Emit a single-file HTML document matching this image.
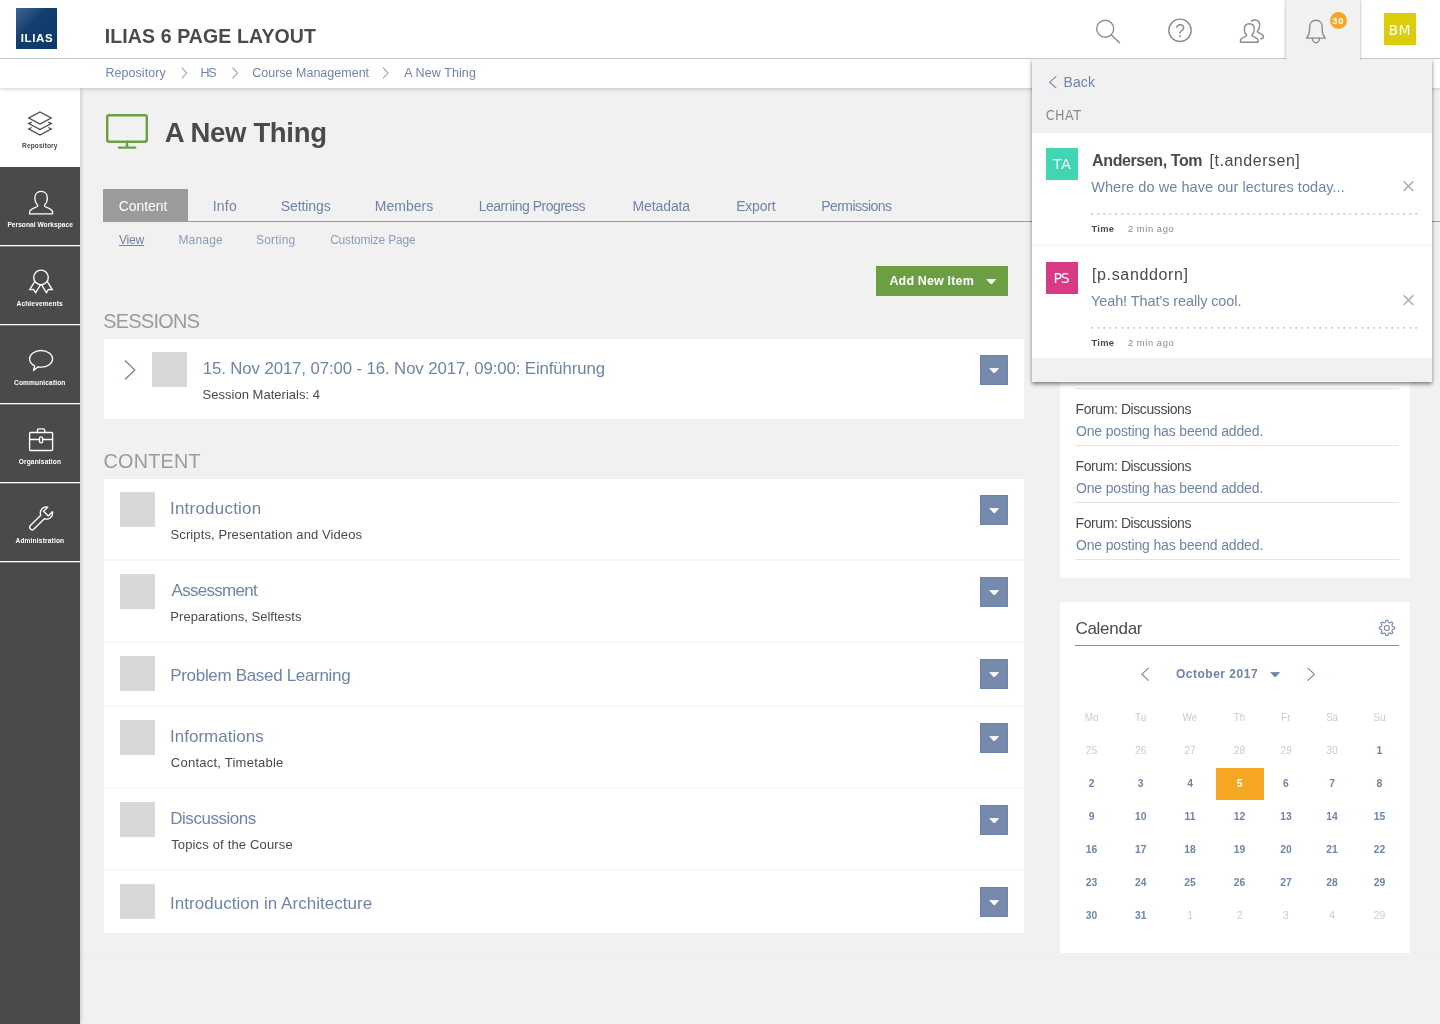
<!DOCTYPE html>
<html lang="en">
<head>
<meta charset="utf-8">
<title>ILIAS 6 Page Layout</title>
<style>
*{box-sizing:border-box;margin:0;padding:0}
html,body{width:1440px;height:1024px;overflow:hidden;background:#f1f1f1;font-family:"Liberation Sans",sans-serif;color:#4a4a4a}
.layer{position:absolute;left:0;top:0;width:1440px;height:1024px;will-change:transform}
.a{position:absolute}
.t{position:absolute;white-space:nowrap;line-height:1}
.c{position:absolute;white-space:nowrap;line-height:1;text-align:center;width:48px;margin-left:-24px}
</style>
</head>
<body>
<div class="layer" id="main" style="z-index:1">
<svg class="a" style="left:103px;top:111px" width="48" height="40" viewBox="103 111 48 40" fill="none" stroke="#6c9f43" stroke-width="2.4" stroke-linejoin="round" stroke-linecap="round"><rect x="107.2" y="115.300" width="39.600" height="26.400" rx="2"/><path d="M127 142v5.400M119 147.600h16.200"/></svg>
<div class="t" id="ptitle" style="left:164.67px;top:118.50px;font-size:27.5px;color:#4a4a4a;font-weight:bold;letter-spacing:-0.323px;">A New Thing</div>
<div class="a" style="left:103px;top:189px;width:85px;height:32px;background:#9b9b9b;"></div>
<div class="a" style="left:103px;top:221px;width:1337px;height:1px;background:#9b9b9b;"></div>
<div class="t" id="tab0" style="left:118.73px;top:199.11px;font-size:14px;color:#fff;letter-spacing:-0.070px;">Content</div>
<div class="t" id="tab1" style="left:212.70px;top:199.11px;font-size:14px;color:#6f84a8;letter-spacing:0.222px;">Info</div>
<div class="t" id="tab2" style="left:280.82px;top:199.11px;font-size:14px;color:#6f84a8;letter-spacing:-0.110px;">Settings</div>
<div class="t" id="tab3" style="left:374.86px;top:199.11px;font-size:14px;color:#6f84a8;letter-spacing:-0.008px;">Members</div>
<div class="t" id="tab4" style="left:478.67px;top:199.11px;font-size:14px;color:#6f84a8;letter-spacing:-0.476px;">Learning Progress</div>
<div class="t" id="tab5" style="left:632.59px;top:199.11px;font-size:14px;color:#6f84a8;letter-spacing:-0.120px;">Metadata</div>
<div class="t" id="tab6" style="left:736.13px;top:199.11px;font-size:14px;color:#6f84a8;letter-spacing:-0.170px;">Export</div>
<div class="t" id="tab7" style="left:821.13px;top:199.11px;font-size:14px;color:#6f84a8;letter-spacing:-0.530px;">Permissions</div>
<div class="t" id="sub0" style="left:118.90px;top:233.90px;font-size:12px;color:#6f84a8;letter-spacing:-0.166px;text-decoration:underline;">View</div>
<div class="t" id="sub1" style="left:178.43px;top:233.90px;font-size:12px;color:#8c9cba;letter-spacing:0.191px;">Manage</div>
<div class="t" id="sub2" style="left:256.00px;top:233.90px;font-size:12px;color:#8c9cba;letter-spacing:0.201px;">Sorting</div>
<div class="t" id="sub3" style="left:330.16px;top:233.90px;font-size:12px;color:#8c9cba;letter-spacing:-0.199px;">Customize Page</div>
<div class="a" style="left:876px;top:266px;width:132px;height:30px;background:#6c9f43;"></div>
<div class="t" id="addbtn" style="left:889.44px;top:275.30px;font-size:12.5px;color:#fff;font-weight:bold;letter-spacing:0.155px;">Add New Item</div>
<svg class="a" style="left:985.8px;top:278.8px" width="10.4" height="5.6" viewBox="0 0 10.4 5.6"><path d="M0.600 0.300h9.200000000000001L5.2 5.3999999999999995z" fill="#fff" stroke="#fff" stroke-width="0.600" stroke-linejoin="round"/></svg>
<div class="t" id="h_sessions" style="left:103.33px;top:312.10px;font-size:19.8px;color:#9b9b9b;letter-spacing:-0.661px;">SESSIONS</div>
<div class="t" id="h_content" style="left:103.55px;top:452.01px;font-size:19.8px;color:#9b9b9b;letter-spacing:0.230px;">CONTENT</div>
<div class="a" style="left:104px;top:339px;width:920px;height:80px;background:#fff;"></div>
<svg class="a" style="left:120px;top:356px" width="20" height="28" viewBox="120 356 20 28" fill="none" stroke="#6f84a8" stroke-width="1.3" stroke-linejoin="miter"><path d="M125 360.500L134.800 370 125 379.500"/></svg>
<div class="a" style="left:152px;top:352px;width:35px;height:35px;background:#d8d8d8;"></div>
<div class="t" id="sess_t" style="left:202.78px;top:360.90px;font-size:16.8px;color:#6f84a8;letter-spacing:-0.104px;">15. Nov 2017, 07:00 - 16. Nov 2017, 09:00: Einführung</div>
<div class="t" id="sess_s" style="left:202.55px;top:388.11px;font-size:13px;color:#4a4a4a;letter-spacing:0.022px;">Session Materials: 4</div>
<div class="a" style="left:980px;top:355px;width:28px;height:30px;background:#758aad;border:1px solid #6d83a8"></div><svg class="a" style="left:988.8px;top:367.8px" width="10.4" height="5.6" viewBox="0 0 10.4 5.6"><path d="M0.600 0.300h9.200000000000001L5.2 5.3999999999999995z" fill="#fff" stroke="#fff" stroke-width="0.600" stroke-linejoin="round"/></svg>
<div class="a" style="left:104px;top:479px;width:920px;height:454px;background:#f7f7f7;"></div>
<div class="a" style="left:104px;top:479px;width:920px;height:80px;background:#fff;"></div>
<div class="a" style="left:120px;top:492px;width:35px;height:35px;background:#d8d8d8;"></div>
<div class="t" id="it0_t" style="left:170.02px;top:500.00px;font-size:17px;color:#6f84a8;letter-spacing:0.215px;">Introduction</div>
<div class="t" id="it0_s" style="left:170.57px;top:528.25px;font-size:13px;color:#4a4a4a;letter-spacing:0.099px;">Scripts, Presentation and Videos</div>
<div class="a" style="left:980px;top:495px;width:28px;height:30px;background:#758aad;border:1px solid #6d83a8"></div><svg class="a" style="left:988.8px;top:507.8px" width="10.4" height="5.6" viewBox="0 0 10.4 5.6"><path d="M0.600 0.300h9.200000000000001L5.2 5.3999999999999995z" fill="#fff" stroke="#fff" stroke-width="0.600" stroke-linejoin="round"/></svg>
<div class="a" style="left:104px;top:561px;width:920px;height:80px;background:#fff;"></div>
<div class="a" style="left:120px;top:574px;width:35px;height:35px;background:#d8d8d8;"></div>
<div class="t" id="it1_t" style="left:171.51px;top:582.00px;font-size:17px;color:#6f84a8;letter-spacing:-0.710px;">Assessment</div>
<div class="t" id="it1_s" style="left:170.36px;top:610.25px;font-size:13px;color:#4a4a4a;letter-spacing:0.015px;">Preparations, Selftests</div>
<div class="a" style="left:980px;top:577px;width:28px;height:30px;background:#758aad;border:1px solid #6d83a8"></div><svg class="a" style="left:988.8px;top:589.8px" width="10.4" height="5.6" viewBox="0 0 10.4 5.6"><path d="M0.600 0.300h9.200000000000001L5.2 5.3999999999999995z" fill="#fff" stroke="#fff" stroke-width="0.600" stroke-linejoin="round"/></svg>
<div class="a" style="left:104px;top:643px;width:920px;height:62px;background:#fff;"></div>
<div class="a" style="left:120px;top:656px;width:35px;height:35px;background:#d8d8d8;"></div>
<div class="t" id="it2_t" style="left:170.26px;top:667.40px;font-size:17px;color:#6f84a8;letter-spacing:-0.320px;">Problem Based Learning</div>
<div class="a" style="left:980px;top:659px;width:28px;height:30px;background:#758aad;border:1px solid #6d83a8"></div><svg class="a" style="left:988.8px;top:671.8px" width="10.4" height="5.6" viewBox="0 0 10.4 5.6"><path d="M0.600 0.300h9.200000000000001L5.2 5.3999999999999995z" fill="#fff" stroke="#fff" stroke-width="0.600" stroke-linejoin="round"/></svg>
<div class="a" style="left:104px;top:707px;width:920px;height:80px;background:#fff;"></div>
<div class="a" style="left:120px;top:720px;width:35px;height:35px;background:#d8d8d8;"></div>
<div class="t" id="it3_t" style="left:170.02px;top:728.00px;font-size:17px;color:#6f84a8;letter-spacing:0.012px;">Informations</div>
<div class="t" id="it3_s" style="left:170.80px;top:756.25px;font-size:13px;color:#4a4a4a;letter-spacing:0.244px;">Contact, Timetable</div>
<div class="a" style="left:980px;top:723px;width:28px;height:30px;background:#758aad;border:1px solid #6d83a8"></div><svg class="a" style="left:988.8px;top:735.8px" width="10.4" height="5.6" viewBox="0 0 10.4 5.6"><path d="M0.600 0.300h9.200000000000001L5.2 5.3999999999999995z" fill="#fff" stroke="#fff" stroke-width="0.600" stroke-linejoin="round"/></svg>
<div class="a" style="left:104px;top:789px;width:920px;height:80px;background:#fff;"></div>
<div class="a" style="left:120px;top:802px;width:35px;height:35px;background:#d8d8d8;"></div>
<div class="t" id="it4_t" style="left:170.26px;top:810.00px;font-size:17px;color:#6f84a8;letter-spacing:-0.476px;">Discussions</div>
<div class="t" id="it4_s" style="left:171.14px;top:838.25px;font-size:13px;color:#4a4a4a;letter-spacing:0.162px;">Topics of the Course</div>
<div class="a" style="left:980px;top:805px;width:28px;height:30px;background:#758aad;border:1px solid #6d83a8"></div><svg class="a" style="left:988.8px;top:817.8px" width="10.4" height="5.6" viewBox="0 0 10.4 5.6"><path d="M0.600 0.300h9.200000000000001L5.2 5.3999999999999995z" fill="#fff" stroke="#fff" stroke-width="0.600" stroke-linejoin="round"/></svg>
<div class="a" style="left:104px;top:871px;width:920px;height:62px;background:#fff;"></div>
<div class="a" style="left:120px;top:884px;width:35px;height:35px;background:#d8d8d8;"></div>
<div class="t" id="it5_t" style="left:170.02px;top:895.40px;font-size:17px;color:#6f84a8;letter-spacing:0.032px;">Introduction in Architecture</div>
<div class="a" style="left:980px;top:887px;width:28px;height:30px;background:#758aad;border:1px solid #6d83a8"></div><svg class="a" style="left:988.8px;top:899.8px" width="10.4" height="5.6" viewBox="0 0 10.4 5.6"><path d="M0.600 0.300h9.200000000000001L5.2 5.3999999999999995z" fill="#fff" stroke="#fff" stroke-width="0.600" stroke-linejoin="round"/></svg>
<div class="a" style="left:80px;top:952px;width:1360px;height:1px;background:#ededed;"></div>
<div class="a" style="left:1060px;top:300px;width:350px;height:278px;background:#fff;"></div>
<div class="a" style="left:1075px;top:388px;width:324px;height:1px;background:#e4e4e4;"></div>
<div class="a" style="left:1075px;top:445px;width:324px;height:1px;background:#e4e4e4;"></div>
<div class="a" style="left:1075px;top:502px;width:324px;height:1px;background:#e4e4e4;"></div>
<div class="a" style="left:1075px;top:559px;width:324px;height:1px;background:#e4e4e4;"></div>
<div class="t" id="nw0_a" style="left:1075.57px;top:402.01px;font-size:14px;color:#4a4a4a;letter-spacing:-0.416px;">Forum: Discussions</div>
<div class="t" id="nw0_b" style="left:1075.95px;top:424.21px;font-size:14px;color:#6f84a8;letter-spacing:-0.154px;">One posting has beend added.</div>
<div class="t" id="nw1_a" style="left:1075.57px;top:459.01px;font-size:14px;color:#4a4a4a;letter-spacing:-0.416px;">Forum: Discussions</div>
<div class="t" id="nw1_b" style="left:1075.95px;top:481.21px;font-size:14px;color:#6f84a8;letter-spacing:-0.154px;">One posting has beend added.</div>
<div class="t" id="nw2_a" style="left:1075.57px;top:516.01px;font-size:14px;color:#4a4a4a;letter-spacing:-0.416px;">Forum: Discussions</div>
<div class="t" id="nw2_b" style="left:1075.95px;top:538.21px;font-size:14px;color:#6f84a8;letter-spacing:-0.154px;">One posting has beend added.</div>
<div class="a" style="left:1060px;top:602px;width:350px;height:351px;background:#fff;"></div>
<div class="t" id="cal_t" style="left:1075.38px;top:620.25px;font-size:17px;color:#4a4a4a;letter-spacing:-0.268px;">Calendar</div>
<div class="a" style="left:1075px;top:645px;width:324px;height:1px;background:#8e8e8e;"></div>
<svg class="a" style="left:1377px;top:618px" width="20" height="20" viewBox="1377 618 20 20" fill="none" stroke="#6f84a8" stroke-width="1.05" stroke-linejoin="round" stroke-linecap="round"><path d="M1385.53 622.37 L1385.93 620.26 L1387.87 620.26 L1388.27 622.37 L1389.84 623.02 L1391.62 621.82 L1392.98 623.18 L1391.78 624.96 L1392.43 626.53 L1394.54 626.93 L1394.54 628.87 L1392.43 629.27 L1391.78 630.84 L1392.98 632.62 L1391.62 633.98 L1389.84 632.78 L1388.27 633.43 L1387.87 635.54 L1385.93 635.54 L1385.53 633.43 L1383.96 632.78 L1382.18 633.98 L1380.82 632.62 L1382.02 630.84 L1381.37 629.27 L1379.26 628.87 L1379.26 626.93 L1381.37 626.53 L1382.02 624.96 L1380.82 623.18 L1382.18 621.82 L1383.96 623.02Z"/><circle cx="1386.900" cy="627.900" r="2.500"/></svg>
<div class="t" id="cal_m" style="left:1175.97px;top:668.01px;font-size:12px;color:#6f84a8;font-weight:bold;letter-spacing:0.506px;">October 2017</div>
<svg class="a" style="left:1270px;top:671.6px" width="10.4" height="5.6" viewBox="0 0 10.4 5.6"><path d="M0.600 0.300h9.200000000000001L5.2 5.3999999999999995z" fill="#6f84a8" stroke="#6f84a8" stroke-width="0.600" stroke-linejoin="round"/></svg>
<svg class="a" style="left:1138px;top:664px" width="14" height="20" viewBox="1138 664 14 20" fill="none" stroke="#6f84a8" stroke-width="1.1" stroke-linejoin="miter"><path d="M1148.700 667.800L1141.900 674.200 1148.700 680.600"/></svg>
<svg class="a" style="left:1304px;top:664px" width="14" height="20" viewBox="1304 664 14 20" fill="none" stroke="#6f84a8" stroke-width="1.1" stroke-linejoin="miter"><path d="M1307.600 667.800L1314.400 674.200 1307.600 680.600"/></svg>
<div class="c" style="left:1091.6px;top:712.93px;font-size:10px;color:#cccccc">Mo</div>
<div class="c" style="left:1140.7px;top:712.93px;font-size:10px;color:#cccccc">Tu</div>
<div class="c" style="left:1190px;top:712.93px;font-size:10px;color:#cccccc">We</div>
<div class="c" style="left:1239.6px;top:712.93px;font-size:10px;color:#cccccc">Th</div>
<div class="c" style="left:1285.9px;top:712.93px;font-size:10px;color:#cccccc">Fr</div>
<div class="c" style="left:1332px;top:712.93px;font-size:10px;color:#cccccc">Sa</div>
<div class="c" style="left:1379.4px;top:712.93px;font-size:10px;color:#cccccc">Su</div>
<div class="a" style="left:1216px;top:768px;width:48px;height:32px;background:#f5a623;"></div>
<div class="c" style="left:1091.6px;top:746.33px;font-size:10.3px;color:#cccccc">25</div>
<div class="c" style="left:1140.7px;top:746.33px;font-size:10.3px;color:#cccccc">26</div>
<div class="c" style="left:1190px;top:746.33px;font-size:10.3px;color:#cccccc">27</div>
<div class="c" style="left:1239.6px;top:746.33px;font-size:10.3px;color:#cccccc">28</div>
<div class="c" style="left:1285.9px;top:746.33px;font-size:10.3px;color:#cccccc">29</div>
<div class="c" style="left:1332px;top:746.33px;font-size:10.3px;color:#cccccc">30</div>
<div class="c" style="left:1379.4px;top:746.33px;font-size:10.3px;color:#6f84a8;font-weight:bold">1</div>
<div class="c" style="left:1091.6px;top:779.33px;font-size:10.3px;color:#6f84a8;font-weight:bold">2</div>
<div class="c" style="left:1140.7px;top:779.33px;font-size:10.3px;color:#6f84a8;font-weight:bold">3</div>
<div class="c" style="left:1190px;top:779.33px;font-size:10.3px;color:#6f84a8;font-weight:bold">4</div>
<div class="c" style="left:1239.6px;top:779.33px;font-size:10.3px;color:#fff;font-weight:bold">5</div>
<div class="c" style="left:1285.9px;top:779.33px;font-size:10.3px;color:#6f84a8;font-weight:bold">6</div>
<div class="c" style="left:1332px;top:779.33px;font-size:10.3px;color:#6f84a8;font-weight:bold">7</div>
<div class="c" style="left:1379.4px;top:779.33px;font-size:10.3px;color:#6f84a8;font-weight:bold">8</div>
<div class="c" style="left:1091.6px;top:812.33px;font-size:10.3px;color:#6f84a8;font-weight:bold">9</div>
<div class="c" style="left:1140.7px;top:812.33px;font-size:10.3px;color:#6f84a8;font-weight:bold">10</div>
<div class="c" style="left:1190px;top:812.33px;font-size:10.3px;color:#6f84a8;font-weight:bold">11</div>
<div class="c" style="left:1239.6px;top:812.33px;font-size:10.3px;color:#6f84a8;font-weight:bold">12</div>
<div class="c" style="left:1285.9px;top:812.33px;font-size:10.3px;color:#6f84a8;font-weight:bold">13</div>
<div class="c" style="left:1332px;top:812.33px;font-size:10.3px;color:#6f84a8;font-weight:bold">14</div>
<div class="c" style="left:1379.4px;top:812.33px;font-size:10.3px;color:#6f84a8;font-weight:bold">15</div>
<div class="c" style="left:1091.6px;top:845.33px;font-size:10.3px;color:#6f84a8;font-weight:bold">16</div>
<div class="c" style="left:1140.7px;top:845.33px;font-size:10.3px;color:#6f84a8;font-weight:bold">17</div>
<div class="c" style="left:1190px;top:845.33px;font-size:10.3px;color:#6f84a8;font-weight:bold">18</div>
<div class="c" style="left:1239.6px;top:845.33px;font-size:10.3px;color:#6f84a8;font-weight:bold">19</div>
<div class="c" style="left:1285.9px;top:845.33px;font-size:10.3px;color:#6f84a8;font-weight:bold">20</div>
<div class="c" style="left:1332px;top:845.33px;font-size:10.3px;color:#6f84a8;font-weight:bold">21</div>
<div class="c" style="left:1379.4px;top:845.33px;font-size:10.3px;color:#6f84a8;font-weight:bold">22</div>
<div class="c" style="left:1091.6px;top:878.33px;font-size:10.3px;color:#6f84a8;font-weight:bold">23</div>
<div class="c" style="left:1140.7px;top:878.33px;font-size:10.3px;color:#6f84a8;font-weight:bold">24</div>
<div class="c" style="left:1190px;top:878.33px;font-size:10.3px;color:#6f84a8;font-weight:bold">25</div>
<div class="c" style="left:1239.6px;top:878.33px;font-size:10.3px;color:#6f84a8;font-weight:bold">26</div>
<div class="c" style="left:1285.9px;top:878.33px;font-size:10.3px;color:#6f84a8;font-weight:bold">27</div>
<div class="c" style="left:1332px;top:878.33px;font-size:10.3px;color:#6f84a8;font-weight:bold">28</div>
<div class="c" style="left:1379.4px;top:878.33px;font-size:10.3px;color:#6f84a8;font-weight:bold">29</div>
<div class="c" style="left:1091.6px;top:911.33px;font-size:10.3px;color:#6f84a8;font-weight:bold">30</div>
<div class="c" style="left:1140.7px;top:911.33px;font-size:10.3px;color:#6f84a8;font-weight:bold">31</div>
<div class="c" style="left:1190px;top:911.33px;font-size:10.3px;color:#cccccc">1</div>
<div class="c" style="left:1239.6px;top:911.33px;font-size:10.3px;color:#cccccc">2</div>
<div class="c" style="left:1285.9px;top:911.33px;font-size:10.3px;color:#cccccc">3</div>
<div class="c" style="left:1332px;top:911.33px;font-size:10.3px;color:#cccccc">4</div>
<div class="c" style="left:1379.4px;top:911.33px;font-size:10.3px;color:#cccccc">29</div>
</div>
<div class="layer" id="side" style="z-index:10">
<div class="a" style="left:0px;top:88px;width:80px;height:936px;background:#4a4a4a;box-shadow:1px 0 4px rgba(0,0,0,.18)"></div>
<div class="a" style="left:0px;top:88px;width:80px;height:79px;background:#fff;"></div>
<div class="a" style="left:0px;top:245px;width:80px;height:1px;background:#fff;"></div>
<div class="a" style="left:0px;top:246px;width:80px;height:1px;background:#7c7c7c;"></div>
<div class="a" style="left:0px;top:324px;width:80px;height:1px;background:#fff;"></div>
<div class="a" style="left:0px;top:325px;width:80px;height:1px;background:#7c7c7c;"></div>
<div class="a" style="left:0px;top:403px;width:80px;height:1px;background:#fff;"></div>
<div class="a" style="left:0px;top:404px;width:80px;height:1px;background:#7c7c7c;"></div>
<div class="a" style="left:0px;top:482px;width:80px;height:1px;background:#fff;"></div>
<div class="a" style="left:0px;top:483px;width:80px;height:1px;background:#7c7c7c;"></div>
<div class="a" style="left:0px;top:561px;width:80px;height:1px;background:#fff;"></div>
<div class="a" style="left:0px;top:562px;width:80px;height:1px;background:#7c7c7c;"></div>
<svg class="a" style="left:26px;top:108px" width="30" height="30" viewBox="26 108 30 30" fill="none" stroke="#4a4a4a" stroke-width="1.35" stroke-linejoin="miter"><path d="M40 112L51.200 118 40 124 28.800 118z"/><path d="M31.600 122.100L28.800 123.600 40 129.600 51.200 123.600 48.400 122.100M31.600 127.500L28.800 129 40 135 51.200 129 48.400 127.500"/></svg>
<svg class="a" style="left:26px;top:187px" width="30" height="30" viewBox="26 187 30 30" fill="none" stroke="#fff" stroke-width="1.35" stroke-linejoin="round" stroke-linecap="round"><path d="M41.100 191.400c-4.100 0-6.300 3-6.300 6.900 0 2.800 1.100 5 2.600 6.500 0.500 0.500 0.400 1.300-0.200 1.700-2.400 1.400-7.600 2.500-7.600 5.500v1.900h23v-1.900c0-3-5.200-4.100-7.600-5.500-0.600-0.400-0.700-1.200-0.200-1.700 1.500-1.500 2.600-3.700 2.600-6.500 0-3.900-2.200-6.900-6.300-6.900z"/></svg>
<svg class="a" style="left:26px;top:266px" width="30" height="30" viewBox="26 266 30 30" fill="none" stroke="#fff" stroke-width="1.35" stroke-linejoin="round" stroke-linecap="round"><circle cx="41" cy="277.400" r="7.300"/><path d="M34.400 282L29.800 289.600 33.600 289.400 35.600 292.800 40.500 284.700M47.600 282L52.200 289.600 48.400 289.400 46.400 292.800 41.500 284.700" stroke-linejoin="miter"/></svg>
<svg class="a" style="left:26px;top:346px" width="30" height="28" viewBox="26 346 30 28" fill="none" stroke="#fff" stroke-width="1.35" stroke-linejoin="round" stroke-linecap="round"><path d="M34.700 365.900C31.500 364.400 29.600 361.800 29.600 358.800c0-4.600 5.100-8.300 11.500-8.300s11.500 3.700 11.500 8.300-5.100 8.300-11.500 8.300c-1 0-2-0.100-2.900-0.300L33.500 370.500z"/></svg>
<svg class="a" style="left:26px;top:425px" width="30" height="30" viewBox="26 425 30 30" fill="none" stroke="#fff" stroke-width="1.35" stroke-linejoin="round" stroke-linecap="round"><rect x="29.600" y="432.500" width="23" height="18" rx="1"/><path d="M37.400 432.500v-2.100c0-0.900 0.700-1.600 1.600-1.600h4.200c0.900 0 1.600 0.700 1.600 1.600v2.100M29.600 439.500h9.800M42.600 439.500h10"/><rect x="39.500" y="436.800" width="3.100" height="6" rx="1.400"/></svg>
<svg class="a" style="left:26px;top:503px" width="30" height="32" viewBox="26 503 30 32" fill="none" stroke="#fff" stroke-width="1.35" stroke-linejoin="round" stroke-linecap="round"><path transform="translate(46.500 513) rotate(45)" d="M-2.500 5.600A6.100 6.100 0 0 1 -3.300 -5.100L-3.300 0.800 3.300 0.800 3.300 -5.100A6.100 6.100 0 0 1 2.500 5.600L2.500 20.200A2.500 2.500 0 0 1 -2.500 20.200Z"/></svg>
<div class="t" id="sb0" style="left:22.07px;top:142.81px;font-size:6.6px;color:#4a4a4a;font-weight:bold;letter-spacing:0.106px;">Repository</div>
<div class="t" id="sb1" style="left:7.42px;top:221.75px;font-size:6.6px;color:#fff;font-weight:bold;letter-spacing:0.038px;">Personal Workspace</div>
<div class="t" id="sb2" style="left:16.47px;top:300.75px;font-size:6.6px;color:#fff;font-weight:bold;letter-spacing:0.146px;">Achievements</div>
<div class="t" id="sb3" style="left:14.00px;top:379.75px;font-size:6.6px;color:#fff;font-weight:bold;letter-spacing:0.129px;">Communication</div>
<div class="t" id="sb4" style="left:18.72px;top:458.75px;font-size:6.6px;color:#fff;font-weight:bold;letter-spacing:0.144px;">Organisation</div>
<div class="t" id="sb5" style="left:15.47px;top:537.75px;font-size:6.6px;color:#fff;font-weight:bold;letter-spacing:0.166px;">Administration</div>
</div>
<div class="layer" id="crumbs" style="z-index:20">
<div class="a" style="left:0px;top:59px;width:1440px;height:29px;background:#fff;box-shadow:0 1px 4px rgba(0,0,0,.2)"></div>
<div class="t" id="cr0" style="left:105.54px;top:66.71px;font-size:12.5px;color:#6f84a8;letter-spacing:0.041px;">Repository</div>
<div class="t" id="cr1" style="left:200.40px;top:66.71px;font-size:12.5px;color:#6f84a8;letter-spacing:-1.200px;">HS</div>
<div class="t" id="cr2" style="left:252.18px;top:66.71px;font-size:12.5px;color:#6f84a8;letter-spacing:0.010px;">Course Management</div>
<div class="t" id="cr3" style="left:404.20px;top:66.71px;font-size:12.5px;color:#6f84a8;letter-spacing:0.100px;">A New Thing</div>
<svg class="a" style="left:179px;top:64px" width="12" height="18" viewBox="179 64 12 18" fill="none" stroke="#a0a0a0" stroke-width="1.1" stroke-linejoin="miter"><path d="M181.7 67.600L186.7 73 181.7 78.400"/></svg>
<svg class="a" style="left:230px;top:64px" width="12" height="18" viewBox="230 64 12 18" fill="none" stroke="#a0a0a0" stroke-width="1.1" stroke-linejoin="miter"><path d="M232.5 67.600L237.5 73 232.5 78.400"/></svg>
<svg class="a" style="left:380px;top:64px" width="12" height="18" viewBox="380 64 12 18" fill="none" stroke="#a0a0a0" stroke-width="1.1" stroke-linejoin="miter"><path d="M383.0 67.600L388.0 73 383.0 78.400"/></svg>
</div>
<div class="layer" id="drop" style="z-index:25">
<div class="a" style="left:1032px;top:59px;width:400px;height:323px;background:#f1f1f1;box-shadow:0 2px 4px rgba(0,0,0,.5)"></div>
<svg class="a" style="left:1045px;top:72px" width="16" height="20" viewBox="1045 72 16 20" fill="none" stroke="#6f84a8" stroke-width="1.1" stroke-linejoin="miter"><path d="M1056.300 76.300L1049.600 82.200 1056.300 88.100"/></svg>
<div class="t" id="back" style="left:1063.48px;top:75.31px;font-size:14px;color:#6f84a8;letter-spacing:0.103px;">Back</div>
<div class="t" id="chat" style="left:1045.65px;top:108.01px;font-size:14px;color:#8a8a8a;letter-spacing:0.587px;font-family:'DejaVu Sans Condensed','Liberation Sans',sans-serif;">CHAT</div>
<div class="a" style="left:1032px;top:244px;width:400px;height:3px;background:#f8f8f8;"></div>
<div class="a" style="left:1032px;top:133px;width:400px;height:111px;background:#fff;"></div>
<div class="a" style="left:1046px;top:148px;width:32px;height:32px;background:#40d5b3;"></div>
<div class="t" id="av0" style="left:1053.00px;top:156.76px;font-size:14px;color:#fff;letter-spacing:0.750px;font-family:'DejaVu Sans','Liberation Sans',sans-serif;">TA</div>
<div class="t" id="n0_name" style="left:1092.11px;top:153.21px;font-size:16px;color:#4a4a4a;font-weight:bold;letter-spacing:-0.401px;">Andersen, Tom</div>
<div class="t" id="n0_user" style="left:1209.50px;top:153.21px;font-size:16px;color:#4a4a4a;letter-spacing:0.528px;">[t.andersen]</div>
<div class="t" id="n0_msg" style="left:1091.19px;top:180.40px;font-size:14.5px;color:#6f84a8;letter-spacing:0.063px;">Where do we have our lectures today...</div>
<svg class="a" style="left:1401px;top:178px" width="16" height="16" viewBox="1401 178 16 16" fill="none" stroke="#b2b2b2" stroke-width="1.7" stroke-linecap="butt"><path d="M1403.700 181.4l9.600 9.600M1413.300 181.4l-9.600 9.600"/></svg>
<svg class="a" style="left:1091px;top:211px" width="330" height="5" viewBox="1091 211 330 5" fill="none" stroke="#bcbcbc" stroke-width="1.1" ><path d="M1091.200 213.9H1419.500" stroke-dasharray="2 4"/></svg>
<div class="t" id="n0_time" style="left:1091.43px;top:225.01px;font-size:9.3px;color:#4a4a4a;font-weight:bold;letter-spacing:0.325px;">Time</div>
<div class="t" id="n0_ago" style="left:1127.92px;top:225.01px;font-size:9.3px;color:#8a8a8a;letter-spacing:0.606px;">2 min ago</div>
<div class="a" style="left:1032px;top:247px;width:400px;height:111px;background:#fff;"></div>
<div class="a" style="left:1046px;top:262px;width:32px;height:32px;background:#d83b84;"></div>
<div class="t" id="av1" style="left:1053.55px;top:270.76px;font-size:14px;color:#fff;letter-spacing:-1.200px;font-family:'DejaVu Sans','Liberation Sans',sans-serif;">PS</div>
<div class="t" id="n1_user" style="left:1091.99px;top:267.21px;font-size:16px;color:#4a4a4a;letter-spacing:0.643px;">[p.sanddorn]</div>
<div class="t" id="n1_msg" style="left:1091.00px;top:294.41px;font-size:14.5px;color:#6f84a8;letter-spacing:-0.103px;">Yeah! That’s really cool.</div>
<svg class="a" style="left:1401px;top:292px" width="16" height="16" viewBox="1401 292 16 16" fill="none" stroke="#b2b2b2" stroke-width="1.7" stroke-linecap="butt"><path d="M1403.700 295.4l9.600 9.600M1413.300 295.4l-9.600 9.600"/></svg>
<svg class="a" style="left:1091px;top:325px" width="330" height="5" viewBox="1091 325 330 5" fill="none" stroke="#bcbcbc" stroke-width="1.1" ><path d="M1091.200 327.9H1419.500" stroke-dasharray="2 4"/></svg>
<div class="t" id="n1_time" style="left:1091.43px;top:339.01px;font-size:9.3px;color:#4a4a4a;font-weight:bold;letter-spacing:0.325px;">Time</div>
<div class="t" id="n1_ago" style="left:1127.92px;top:339.01px;font-size:9.3px;color:#8a8a8a;letter-spacing:0.606px;">2 min ago</div>
</div>
<div class="layer" id="header" style="z-index:30">
<div class="a" style="left:0px;top:0px;width:1440px;height:58px;background:#fff;"></div>
<div class="a" style="left:0px;top:58px;width:1440px;height:1px;background:#c6c6c6;"></div>
<div class="a" style="left:16px;top:8px;width:41px;height:41px;background:linear-gradient(135deg,#41648f 0%,#123f6f 40%,#0a3867 100%);"></div>
<div class="t" id="logo" style="left:20.79px;top:33.31px;font-size:11.5px;color:#fff;font-weight:bold;letter-spacing:0.600px;">ILIAS</div>
<div class="t" id="title" style="left:104.75px;top:26.81px;font-size:19.5px;color:#4a4a4a;font-weight:bold;letter-spacing:0.113px;">ILIAS 6 PAGE LAYOUT</div>
<svg class="a" style="left:1090px;top:14px" width="36" height="34" viewBox="1090 14 36 34" fill="none" stroke="#8c8c8c" stroke-width="1.4" stroke-linejoin="round" stroke-linecap="round"><circle cx="1105.200" cy="28.700" r="8.500"/><path d="M1111.400 34.900L1119.400 42.800"/></svg>
<svg class="a" style="left:1164px;top:14px" width="32" height="32" viewBox="1164 14 32 32" fill="none" stroke="#8c8c8c" stroke-width="1.4" stroke-linejoin="round" stroke-linecap="round"><circle cx="1180" cy="30.300" r="11.200"/><text x="1180" y="36.700" text-anchor="middle" font-family="Liberation Sans, sans-serif" font-size="17.5" fill="#8e8e8e" stroke="none">?</text></svg>
<svg class="a" style="left:1236px;top:16px" width="32" height="30" viewBox="1236 16 32 30" fill="none" stroke="#8c8c8c" stroke-width="1.4" stroke-linejoin="round" stroke-linecap="round"><path d="M1249.300 23.800c-3.300 0-5 2.500-5 5.600 0 2.300 0.900 4.100 2.100 5.300 0.400 0.400 0.300 1-0.200 1.300-1.900 1.100-5.700 2-5.700 4.200v2h17.600v-2c0-2.200-3.800-3.100-5.700-4.200-0.500-0.300-0.600-0.900-0.200-1.300 1.200-1.200 2.100-3 2.100-5.300 0-3.100-1.700-5.600-5-5.600z"/><path d="M1251.200 21.300c1.100-0.900 2.400-1.300 3.700-1.300 3.100 0 4.800 2.500 4.800 5.600 0 2.300-0.900 4.100-2.100 5.300-0.400 0.400-0.300 1 0.200 1.300 1.900 1.100 5.700 2 5.700 4.200 0 1.600-1 2.400-2.800 2.400"/></svg>
<div class="a" style="left:1384px;top:13px;width:32px;height:32px;background:#dbcd0a;"></div>
<div class="t" id="bm" style="left:1388.55px;top:23.01px;font-size:14px;color:#fff;letter-spacing:0.450px;font-family:'DejaVu Sans','Liberation Sans',sans-serif;">BM</div>
</div>
<div class="layer" id="belltab" style="z-index:31">
<div class="a" style="left:1286px;top:0px;width:74px;height:60px;background:#f1f1f1;box-shadow:0 0 3px rgba(0,0,0,.35);clip-path:inset(0 -5px 0 -5px)"></div>
<svg class="a" style="left:1302px;top:16px" width="30" height="30" viewBox="1302 16 30 30" fill="none" stroke="#8c8c8c" stroke-width="1.4" stroke-linejoin="round" stroke-linecap="round"><path d="M1315.900 20.300c-3.900 0-6.300 2.900-6.300 6.800v3.500c0 3.500-1.400 5.500-3.100 7.500h18.800c-1.700-2-3.100-4-3.100-7.500v-3.500c0-3.900-2.400-6.800-6.300-6.800z"/><path d="M1312.300 38.300a3.600 4.400 0 0 0 7.200 0"/></svg>
<div class="a" style="left:1330px;top:12px;width:17px;height:17px;background:#f5a623;border-radius:50%"></div>
<div class="t" id="badge" style="left:1332.20px;top:16.04px;font-size:9.4px;color:#fff;font-weight:bold;letter-spacing:0.750px;">30</div>
</div>
</body>
</html>
